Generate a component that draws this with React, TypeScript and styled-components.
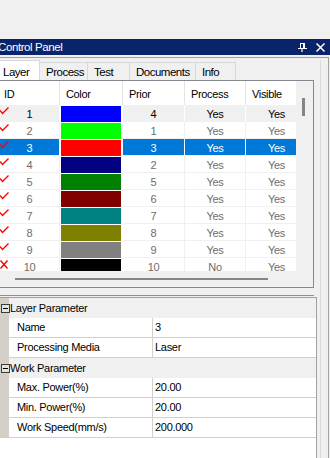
import styled, { createGlobalStyle } from 'styled-components'

const GlobalStyle = createGlobalStyle`
  html, body {
    margin: 0;
    padding: 0;
    background: #f0f0f0;
    overflow: hidden;
  }
  body {
    font-family: "Liberation Sans", Arial, sans-serif;
    font-size: 11px;
    color: #000;
  }
`;

const Page = styled.div`
  width: 330px;
  height: 458px;
  overflow: hidden;
  padding-top: 39px;
  box-sizing: border-box;
`;

const Panel = styled.div`
  margin-left: -4px;
  width: 333px;
`;

const TitleBar = styled.div`
  width: 334px;
  height: 16px;
  box-sizing: border-box;
  padding: 0 5px 0 2px;
  display: flex;
  align-items: center;
  background: #0a246a;
  color: #fff;
  font-size: 11.5px;
  letter-spacing: -0.4px;
`;

const Title = styled.div`
  flex: 1;
  white-space: nowrap;
`;

const TitleIcon = styled.svg`
  display: block;
  flex: none;
  & + & {
    margin-left: 9px;
  }
`;

const Frame = styled.div`
  margin-top: 2px;
  width: 333px;
  height: 410px;
  box-sizing: border-box;
  border: 1px solid #a0a0a0;
  border-bottom: none;
  padding: 2px 7px 0 2px;
`;

const Content = styled.div`
  width: 322px;
  height: 100%;
  box-sizing: border-box;
  border-right: 1px solid #dadada;
`;

const TabStrip = styled.div`
  display: flex;
  align-items: flex-end;
  height: 20px;
`;

const Tab = styled.div<{ $width: number; $active?: boolean }>`
  width: ${p => p.$width}px;
  height: ${p => (p.$active ? 20 : 18)}px;
  box-sizing: border-box;
  padding: ${p => (p.$active ? '4px 0 0 4px' : '2px 0 0 6px')};
  border-top: 1px solid #d9d9d9;
  border-right: 1px solid #d9d9d9;
  background: ${p => (p.$active ? '#ffffff' : '#f0f0f0')};
  font-size: 11.5px;
  letter-spacing: -0.5px;
  line-height: 14px;
  white-space: nowrap;
`;

const GridBox = styled.div`
  width: 315px;
  height: 208px;
  box-sizing: border-box;
  border: 1px solid #828790;
  background: #fff;
  display: grid;
  grid-template-columns: 296px 17px;
  grid-template-rows: 190px 16px;
`;

const Viewport = styled.div`
  overflow: hidden;
  letter-spacing: -0.35px;
`;

const COLS = '60px 63px 62px 61px 62px';

const HeaderRow = styled.div`
  display: grid;
  grid-template-columns: ${COLS};
  height: 24px;
`;

const HeaderCell = styled.div`
  border-right: 1px solid #e5e5e5;
  padding: 2px 0 0 6px;
  line-height: 22px;
  white-space: nowrap;

  &:first-child {
    padding-left: 4px;
  }
`;

type RowState = 'normal' | 'focus' | 'selected';

const Row = styled.div<{ $state: RowState }>`
  display: grid;
  grid-template-columns: ${COLS};
  height: 17px;
  --bg: ${p => (p.$state === 'selected' ? '#0078d7' : p.$state === 'focus' ? '#f0f0f0' : '#ffffff')};
  --fg: ${p => (p.$state === 'selected' ? '#ffffff' : p.$state === 'focus' ? '#000000' : '#6d6d6d')};
  --line: ${p => (p.$state === 'normal' ? '#f0f0f0' : '#ffffff')};
`;

const Cell = styled.div`
  box-sizing: border-box;
  height: 17px;
  background: var(--bg);
  color: var(--fg);
  border-right: 1px solid var(--line);
  border-bottom: 1px solid #f0f0f0;
  text-align: center;
  padding-top: 2px;
  line-height: 14px;
  white-space: nowrap;
`;

const IdCell = styled(Cell)`
  display: grid;
  grid-template-columns: 9px 1fr 9px;
  padding-top: 0;
`;

const IdNumber = styled.span`
  padding-top: 2px;
`;

const Mark = styled.svg`
  display: block;
  margin-top: 2px;
`;

const SwatchCell = styled.div`
  box-sizing: border-box;
  height: 17px;
  background: #fff;
  padding: 1px 1px 0 1px;
  border-right: 1px solid #fff;
`;

const Swatch = styled.div<{ $color: string }>`
  height: 16px;
  background: ${p => p.$color};
`;

const VScroll = styled.div`
  background: #f0f0f0;
  padding: 17px 0 0 6px;
`;

const VThumb = styled.div`
  width: 3px;
  height: 18px;
  background: #858585;
`;

const HScroll = styled.div`
  background: #f0f0f0;
  padding: 7px 0 0 15px;
`;

const HThumb = styled.div`
  width: 253px;
  height: 2px;
  background: #858585;
`;

const Corner = styled.div`
  background: #f0f0f0;
`;

const Divider = styled.div`
  width: 315px;
  height: 1px;
  margin: 7px 0 1px;
  background: #8f8f8f;
`;

const PropGrid = styled.div`
  width: 318px;
  height: 170px;
  box-sizing: border-box;
  border: 1px solid #a0a0a0;
  background: #fff;
  letter-spacing: -0.3px;
`;

const CategoryRow = styled.div`
  display: grid;
  grid-template-columns: 9px 1fr;
  height: 20px;
  background: #f0f0f0;
  line-height: 20px;
`;

const Gutter = styled.div`
  background: #d4d0c8;
  overflow: visible;
`;

const Toggle = styled.div`
  position: relative;
  width: 9px;
  height: 9px;
  margin: 6px 0 0 1px;
  box-sizing: border-box;
  border: 1px solid #3c3c3c;
  background: #dfe6dc;

  &::after {
    content: '';
    position: absolute;
    left: 1px;
    top: 3px;
    width: 5px;
    height: 1px;
    background: #000;
  }
`;

const CategoryText = styled.div`
  padding-left: 1px;
  white-space: nowrap;
`;

const PropRow = styled.div`
  display: grid;
  grid-template-columns: 9px 144px 1fr;
  height: 20px;
`;

const PropLabel = styled.div`
  border-right: 1px solid #d4d0c8;
  border-bottom: 1px solid #d4d0c8;
  padding-left: 8px;
  line-height: 19px;
  white-space: nowrap;
`;

const PropValue = styled.div`
  border-bottom: 1px solid #d4d0c8;
  padding-left: 2px;
  line-height: 19px;
  white-space: nowrap;
`;

const layers = [
  { id: 1, color: '#0000ff', prior: 4, process: 'Yes', ok: true },
  { id: 2, color: '#00ff00', prior: 1, process: 'Yes', ok: true },
  { id: 3, color: '#ff0000', prior: 3, process: 'Yes', ok: true },
  { id: 4, color: '#000080', prior: 2, process: 'Yes', ok: true },
  { id: 5, color: '#008000', prior: 5, process: 'Yes', ok: true },
  { id: 6, color: '#800000', prior: 6, process: 'Yes', ok: true },
  { id: 7, color: '#008080', prior: 7, process: 'Yes', ok: true },
  { id: 8, color: '#808000', prior: 8, process: 'Yes', ok: true },
  { id: 9, color: '#808080', prior: 9, process: 'Yes', ok: true },
  { id: 10, color: '#000000', prior: 10, process: 'No', ok: false },
];

const tabs = [
  { name: 'Layer', width: 41 },
  { name: 'Process', width: 48 },
  { name: 'Test', width: 42 },
  { name: 'Documents', width: 66 },
  { name: 'Info', width: 40 },
];

const params = [
  { group: 'Layer Parameter', items: [['Name', '3'], ['Processing Media', 'Laser']] },
  { group: 'Work Parameter', items: [['Max. Power(%)', '20.00'], ['Min. Power(%)', '20.00'], ['Work Speed(mm/s)', '200.000']] },
];

function CheckMark({ ok }: { ok: boolean }) {
  return ok ? (
    <Mark width="9" height="8" viewBox="0 0 9 8">
      <polyline points="0,3.5 2.5,6.5 8.5,0.5" fill="none" stroke="#ff0000" strokeWidth="1.4" />
    </Mark>
  ) : (
    <Mark width="9" height="9" viewBox="0 0 9 9">
      <path d="M0.5 0.5 L7.5 8.5 M7.5 0.5 L0.5 8.5" fill="none" stroke="#ff0000" strokeWidth="1.4" />
    </Mark>
  );
}

export default function App(): JSX.Element {
  return (
    <Page>
      <GlobalStyle />
      <Panel>
        <TitleBar>
          <Title>Control Panel</Title>
          <TitleIcon width="9" height="9" viewBox="0 0 9 9">
            <path d="M2.5 0 V5 M5.5 0 V5 M6.5 0 V5 M2 0.5 H7" stroke="#fff" strokeWidth="1" fill="none" />
            <path d="M0 5.5 H9" stroke="#fff" strokeWidth="1" />
            <path d="M4 6 V9" stroke="#fff" strokeWidth="1.2" />
          </TitleIcon>
          <TitleIcon width="9" height="9" viewBox="0 0 9 9">
            <path d="M0.5 0.5 L8.5 8.5 M8.5 0.5 L0.5 8.5" stroke="#fff" strokeWidth="1.5" />
          </TitleIcon>
        </TitleBar>

        <Frame>
          <Content>
            <TabStrip>
              {tabs.map((t, i) => (
                <Tab key={t.name} $width={t.width} $active={i === 0}>{t.name}</Tab>
              ))}
            </TabStrip>

            <GridBox>
              <Viewport>
                <HeaderRow>
                  <HeaderCell>ID</HeaderCell>
                  <HeaderCell>Color</HeaderCell>
                  <HeaderCell>Prior</HeaderCell>
                  <HeaderCell>Process</HeaderCell>
                  <HeaderCell>Visible</HeaderCell>
                </HeaderRow>
                {layers.map((l) => (
                  <Row key={l.id} $state={l.id === 1 ? 'focus' : l.id === 3 ? 'selected' : 'normal'}>
                    <IdCell>
                      <CheckMark ok={l.ok} />
                      <IdNumber>{l.id}</IdNumber>
                    </IdCell>
                    <SwatchCell><Swatch $color={l.color} /></SwatchCell>
                    <Cell>{l.prior}</Cell>
                    <Cell>{l.process}</Cell>
                    <Cell>Yes</Cell>
                  </Row>
                ))}
              </Viewport>
              <VScroll><VThumb /></VScroll>
              <HScroll><HThumb /></HScroll>
              <Corner />
            </GridBox>

            <Divider />

            <PropGrid>
              {params.map((g) => (
                <div key={g.group}>
                  <CategoryRow>
                    <Gutter><Toggle /></Gutter>
                    <CategoryText>{g.group}</CategoryText>
                  </CategoryRow>
                  {g.items.map(([label, value]) => (
                    <PropRow key={label}>
                      <Gutter />
                      <PropLabel>{label}</PropLabel>
                      <PropValue>{value}</PropValue>
                    </PropRow>
                  ))}
                </div>
              ))}
            </PropGrid>
          </Content>
        </Frame>
      </Panel>
    </Page>
  )
}
